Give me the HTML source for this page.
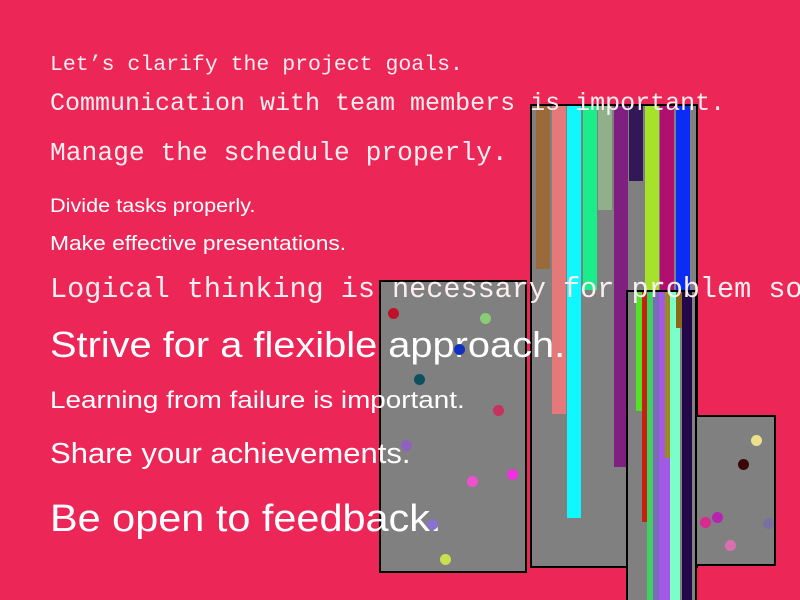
<!DOCTYPE html>
<html><head><meta charset="utf-8"><style>
*{margin:0;padding:0}
html,body{width:800px;height:600px;overflow:hidden}
body{background:#ec2758;position:relative}
.p{position:absolute;background:#808080;border:2px solid #000;box-sizing:border-box}
.b{position:absolute}
.d{position:absolute;width:11px;height:11px;border-radius:50%;margin:-5px 0 0 -5px}
.t{position:absolute;left:50px;color:#fff;white-space:nowrap;line-height:1;transform-origin:0 50%}
.m{font-family:"Liberation Mono",monospace;color:#fbeef0}
.s{font-family:"Liberation Sans",sans-serif}
</style></head><body>
<div class="p" style="left:530px;top:104px;width:168px;height:464px"></div>
<div class="b" style="left:536px;top:106px;width:14px;height:163px;background:#9a6a3a"></div>
<div class="b" style="left:552px;top:106px;width:14px;height:308px;background:#e57878"></div>
<div class="b" style="left:567px;top:106px;width:14px;height:412px;background:#0ff8ff"></div>
<div class="b" style="left:583px;top:106px;width:14px;height:184px;background:#1aee8a"></div>
<div class="b" style="left:598px;top:106px;width:14px;height:104px;background:#8fb08a"></div>
<div class="b" style="left:614px;top:106px;width:14px;height:361px;background:#7f1f7f"></div>
<div class="b" style="left:629px;top:106px;width:14px;height:75px;background:#331858"></div>
<div class="b" style="left:645px;top:106px;width:14px;height:184px;background:#a6e22a"></div>
<div class="b" style="left:660px;top:106px;width:14px;height:184px;background:#b00f70"></div>
<div class="b" style="left:676px;top:106px;width:14px;height:184px;background:#0a2cf5"></div>
<div class="p" style="left:694px;top:415px;width:82px;height:151px"></div>
<div class="d" style="left:756px;top:440px;background:#eee08a"></div>
<div class="d" style="left:743px;top:464px;background:#3a0808"></div>
<div class="d" style="left:705px;top:522px;background:#d82a90"></div>
<div class="d" style="left:717px;top:517px;background:#b822b0"></div>
<div class="d" style="left:730px;top:545px;background:#d870b0"></div>
<div class="d" style="left:768px;top:523px;background:#7a70a0"></div>
<div class="p" style="left:626px;top:290px;width:71px;height:320px"></div>
<div class="b" style="left:636px;top:292px;width:6px;height:119px;background:#55e02a"></div>
<div class="b" style="left:642px;top:292px;width:5px;height:230px;background:#c82010"></div>
<div class="b" style="left:647px;top:292px;width:6px;height:310px;background:#3fd060"></div>
<div class="b" style="left:653px;top:292px;width:6px;height:310px;background:#7a6ab8"></div>
<div class="b" style="left:659px;top:292px;width:11px;height:310px;background:#a458e8"></div>
<div class="b" style="left:665px;top:292px;width:5px;height:166px;background:#9a8a20"></div>
<div class="b" style="left:670px;top:292px;width:10px;height:310px;background:#7affc8"></div>
<div class="b" style="left:676px;top:292px;width:6px;height:36px;background:#8a6a18"></div>
<div class="b" style="left:682px;top:292px;width:10px;height:310px;background:#220848"></div>
<div class="p" style="left:379px;top:280px;width:148px;height:293px"></div>
<div class="d" style="left:393px;top:313px;background:#c0102a"></div>
<div class="d" style="left:485px;top:318px;background:#88cc78"></div>
<div class="d" style="left:419px;top:379px;background:#0c5060"></div>
<div class="d" style="left:498px;top:410px;background:#c83060"></div>
<div class="d" style="left:406px;top:445px;background:#9060c0"></div>
<div class="d" style="left:472px;top:481px;background:#f050d0"></div>
<div class="d" style="left:512px;top:474px;background:#f030e0"></div>
<div class="d" style="left:445px;top:559px;background:#c8e050"></div>
<div class="t m" style="top:55px;font-size:21.5px">Let’s clarify the project goals.</div>
<div class="t m" style="top:91px;font-size:25px">Communication with team members is important.</div>
<div class="t m" style="top:140px;font-size:26.3px">Manage the schedule properly.</div>
<div class="t s" style="top:197px;font-size:19px;transform:scaleX(1.14)">Divide tasks properly.</div>
<div class="t s" style="top:234px;font-size:20px;transform:scaleX(1.14)">Make effective presentations.</div>
<div class="t m" style="top:276px;font-size:28.5px">Logical thinking is necessary for problem so</div>
<div class="t s" style="top:327px;font-size:36px;transform:scaleX(1.105)">Strive for a flexible approach.</div>
<div class="t s" style="top:389px;font-size:24px;transform:scaleX(1.16)">Learning from failure is important.</div>
<div class="t s" style="top:440px;font-size:29px;transform:scaleX(1.07)">Share your achievements.</div>
<div class="t s" style="top:500px;font-size:38px;transform:scaleX(1.09)">Be open to feedback.</div>
<div class="d" style="left:459px;top:349px;background:#1030c0"></div>
<div class="d" style="left:432px;top:524px;background:#8a70d0"></div>
</body></html>
